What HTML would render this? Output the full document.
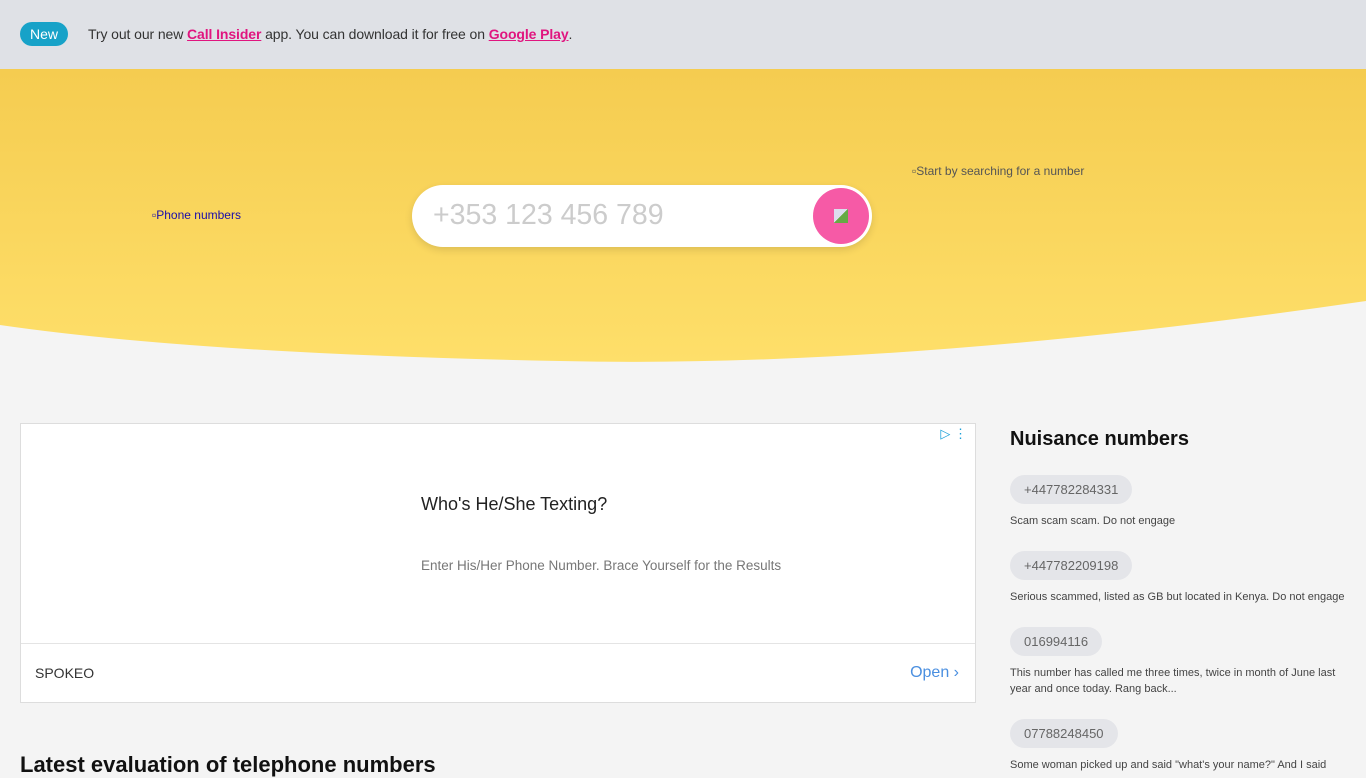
<!DOCTYPE html>
<html><head><meta charset="utf-8"><style>
body{margin:0;width:1366px;height:768px;overflow:hidden;background:#f4f4f4;font-family:"Liberation Sans",Arial,sans-serif;position:relative}
.top{position:absolute;left:0;top:0;width:1366px;height:69px;background:#dfe1e6}
.badge{position:absolute;left:20px;top:22px;width:48px;height:24px;border-radius:12px;background:#17a2c8;color:#fff;font-size:14px;line-height:24px;text-align:center}
.msg{position:absolute;left:88px;top:26px;font-size:14px;color:#333;letter-spacing:-0.1px}
.msg a{color:#e0157f;font-weight:bold;text-decoration:underline}
.abs{position:absolute}
.search{left:412px;top:185px;width:460px;height:62px;border-radius:31px;background:#fff;box-shadow:0 3px 8px rgba(0,0,0,.12)}
.search span{position:absolute;left:21px;top:14px;font-size:28.5px;color:#ccc}
.btn{position:absolute;right:3px;top:3px;width:56px;height:56px;border-radius:50%;background:#f65aa6}
.btn i{position:absolute;left:21px;top:21px;width:14px;height:14px;background:linear-gradient(135deg,#dde 50%,#6a4 50%)}
.ad{left:20px;top:423px;width:954px;height:278px;background:#fff;border:1px solid #ddd}
.num{display:inline-block;background:#e4e5e9;color:#666;font-size:13px;padding:0 14px;height:29px;line-height:29px;border-radius:15px}
.d{font-size:11px;color:#444;line-height:16px;margin-top:9px;width:340px}
</style></head><body>
<div class="top"><div class="badge">New</div><div class="msg">Try out our new <a>Call Insider</a> app. You can download it for free on <a>Google Play</a>.</div></div>
<svg class="abs" style="left:0;top:69px" width="1366" height="300"><defs><linearGradient id="g" x1="0" y1="0" x2="0" y2="1"><stop offset="0" stop-color="#f5cc50"/><stop offset="1" stop-color="#fedf6a"/></linearGradient></defs><path d="M0 0H1366V232Q900 300 560 292Q200 285 0 256Z" fill="url(#g)"/></svg>
<div class="abs" style="left:152px;top:208px;font-size:12px;color:#1a0dab">▫Phone numbers</div>
<div class="abs" style="left:912px;top:164px;font-size:12px;color:#555">▫Start by searching for a number</div>
<div class="abs search"><span>+353 123 456 789</span><div class="btn"><i></i></div></div>
<div class="abs ad">
<div class="abs" style="right:8px;top:2px;color:#1ba0d8;font-size:13px">▷ ⋮</div>
<div class="abs" style="left:400px;top:70px;font-size:18px;color:#222">Who's He/She Texting?</div>
<div class="abs" style="left:400px;top:134px;font-size:13.5px;color:#777">Enter His/Her Phone Number. Brace Yourself for the Results</div>
<div class="abs" style="left:0;top:219px;width:954px;border-top:1px solid #e4e4e4"></div>
<div class="abs" style="left:14px;top:241px;font-size:14px;color:#333">SPOKEO</div>
<div class="abs" style="right:16px;top:240px;font-size:16px;color:#4a8fe0">Open ›</div>
</div>
<div class="abs" style="left:20px;top:752px;font-size:22px;font-weight:bold;color:#111">Latest evaluation of telephone numbers</div>
<div class="abs" style="left:1010px;top:428px">
<div style="font-size:20px;font-weight:bold;color:#111;margin-bottom:24px">Nuisance numbers</div>
<div class="num">+447782284331</div><div class="d">Scam scam scam. Do not engage</div>
<div style="height:22px"></div><div class="num">+447782209198</div><div class="d">Serious scammed, listed as GB but located in Kenya. Do not engage</div>
<div style="height:22px"></div><div class="num">016994116</div><div class="d">This number has called me three times, twice in month of June last year and once today. Rang back...</div>
<div style="height:22px"></div><div class="num">07788248450</div><div class="d">Some woman picked up and said "what's your name?" And I said</div>
</div>
</body></html>
